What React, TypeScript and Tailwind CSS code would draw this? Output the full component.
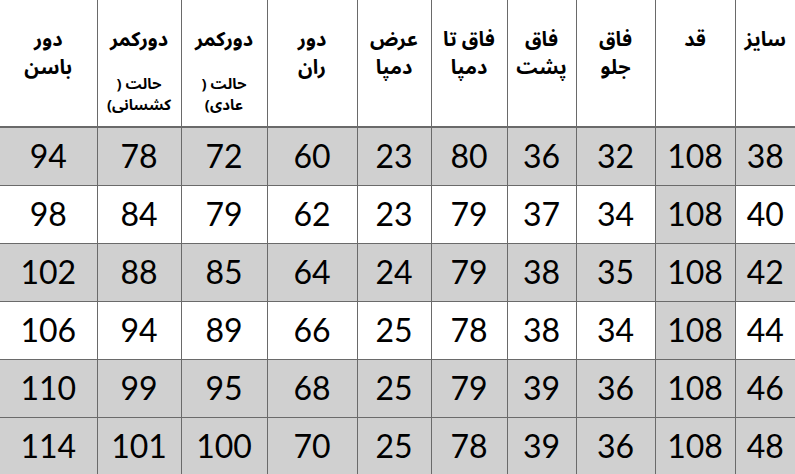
import React from "react";

type Row = {
  size: number;
  height: number;
  frontRise: number;
  backRise: number;
  riseToHem: number;
  hemWidth: number;
  thigh: number;
  waist: number;
  waistStretch: number;
  hip: number;
  gray: boolean;
};

const ROWS: Row[] = [
  { size: 38, height: 108, frontRise: 32, backRise: 36, riseToHem: 80, hemWidth: 23, thigh: 60, waist: 72, waistStretch: 78, hip: 94, gray: true },
  { size: 40, height: 108, frontRise: 34, backRise: 37, riseToHem: 79, hemWidth: 23, thigh: 62, waist: 79, waistStretch: 84, hip: 98, gray: false },
  { size: 42, height: 108, frontRise: 35, backRise: 38, riseToHem: 79, hemWidth: 24, thigh: 64, waist: 85, waistStretch: 88, hip: 102, gray: true },
  { size: 44, height: 108, frontRise: 34, backRise: 38, riseToHem: 78, hemWidth: 25, thigh: 66, waist: 89, waistStretch: 94, hip: 106, gray: false },
  { size: 46, height: 108, frontRise: 36, backRise: 39, riseToHem: 79, hemWidth: 25, thigh: 68, waist: 95, waistStretch: 99, hip: 110, gray: true },
  { size: 48, height: 108, frontRise: 36, backRise: 39, riseToHem: 78, hemWidth: 25, thigh: 70, waist: 100, waistStretch: 101, hip: 114, gray: true },
];

// widths in RTL order (right to left)
const COLS = ["w-[60px]", "w-[80px]", "w-[79px]", "w-[69px]", "w-[76px]", "w-[74px]", "w-[90px]", "w-[86px]", "w-[84px]", "w-[97px]"];

const headFont = { fontFamily: '"Noto Sans Arabic", "Noto Naskh Arabic", "Liberation Sans", "DejaVu Sans", sans-serif' };
const numFont = { fontFamily: 'Lato, "Open Sans", sans-serif' };

function Head({ lines, sub }: { lines: string[]; sub?: string[] }) {
  return (
    <div className="flex flex-col items-center">
      {lines.map(l => (
        <div key={l} className="text-[20px] leading-[28px] font-bold text-black">{l}</div>
      ))}
      {sub && (
        <div className="mt-[20px] flex flex-col items-center">
          {sub.map(s => (
            <div key={s} className="text-[15px] leading-[21px] font-bold text-black">{s}</div>
          ))}
        </div>
      )}
    </div>
  );
}

export default function App() {
  const heads: { lines: string[]; sub?: string[] }[] = [
    { lines: ["سایز"] },
    { lines: ["قد"] },
    { lines: ["فاق", "جلو"] },
    { lines: ["فاق", "پشت"] },
    { lines: ["فاق تا", "دمپا"] },
    { lines: ["عرض", "دمپا"] },
    { lines: ["دور", "ران"] },
    { lines: ["دورکمر"], sub: ["حالت (", "عادی)"] },
    { lines: ["دورکمر"], sub: ["حالت (", "کشسانی)"] },
    { lines: ["دور", "باسن"] },
  ];

  return (
    <div className="w-[795px] h-[474px] overflow-hidden bg-white">
      <table dir="rtl" className="table-fixed border-collapse w-[795px]">
        <colgroup>
          {COLS.map((c, i) => <col key={i} className={c} />)}
        </colgroup>
        <thead>
          <tr className="h-[127px]">
            {heads.map((h, i) => (
              <th
                key={i}
                style={headFont}
                className={`align-top pt-[26px] px-0 font-bold border-b-2 border-b-[#6a6a6a] ${i < 9 ? "border-l border-l-[#6a6a6a]" : ""}`}
              >
                <Head lines={h.lines} sub={h.sub} />
              </th>
            ))}
          </tr>
        </thead>
        <tbody>
          {ROWS.map((r, ri) => {
            const vals = [r.size, r.height, r.frontRise, r.backRise, r.riseToHem, r.hemWidth, r.thigh, r.waist, r.waistStretch, r.hip];
            return (
              <tr key={r.size} className="h-[58px]">
                {vals.map((v, i) => {
                  const gray = r.gray || i === 1;
                  return (
                    <td
                      key={i}
                      style={numFont}
                      className={`text-center align-middle text-[32px] leading-none text-black p-0 ${gray ? "bg-[#d0d0d0]" : "bg-white"} ${i < 9 ? "border-l border-l-[#6a6a6a]" : ""} ${ri < ROWS.length - 1 ? "border-b border-b-[#6a6a6a]" : ""}`}
                    >
                      {v}
                    </td>
                  );
                })}
              </tr>
            );
          })}
        </tbody>
      </table>
    </div>
  );
}
